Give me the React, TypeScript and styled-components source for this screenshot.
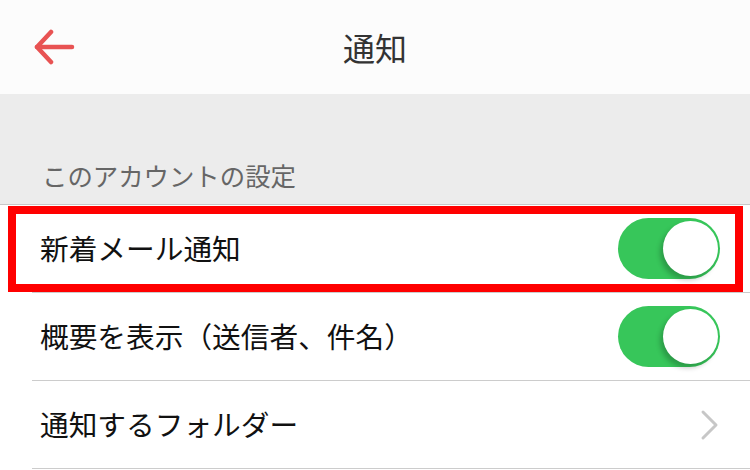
import styled, { createGlobalStyle } from 'styled-components';

const GlobalStyle = createGlobalStyle`
  html, body {
    margin: 0;
    padding: 0;
    background: #ffffff;
  }
  body {
    font-family: "Noto Sans CJK JP", "Noto Sans", sans-serif;
  }
`;

const Screen = styled.div`
  width: 750px;
  height: 470px;
  overflow: hidden;
  background: #ffffff;
`;

const Header = styled.header`
  height: 94px;
  background: #fcfcfc;
  display: grid;
  grid-template-columns: 120px 1fr 120px;
  align-items: center;
`;

const BackButton = styled.button`
  border: none;
  background: none;
  padding: 0 0 0 33px;
  height: 40px;
  display: flex;
  align-items: center;
  cursor: pointer;
`;

const Title = styled.h1`
  margin: 0;
  text-align: center;
  font-size: 32px;
  font-weight: 400;
  color: #333333;
  line-height: 1;
`;

const SectionHead = styled.div`
  height: 111px;
  background: #ececec;
  border-bottom: 1px solid #c8c8c8;
  box-sizing: border-box;
  display: flex;
  align-items: flex-end;
  padding: 0 0 16px 42px;
  font-size: 25.4px;
  color: #666666;
  line-height: 1;
`;

const List = styled.ul`
  list-style: none;
  margin: 0;
  padding: 0;
`;

const Row = styled.li`
  position: relative;
  height: 88px;
  margin-left: 32px;
  padding: 0 30px 0 8px;
  box-sizing: border-box;
  border-bottom: 1px solid #cccccc;
  display: flex;
  align-items: center;
  justify-content: space-between;
  font-size: 28.7px;
  color: #111111;
`;

const Highlight = styled.span`
  position: absolute;
  left: -24px;
  right: 7px;
  top: 1px;
  bottom: 0px;
  border: 8px solid #ff0000;
  pointer-events: none;
`;

const Label = styled.span`
  line-height: 1;
`;

const Track = styled.span<{ $on: boolean }>`
  position: relative;
  width: 102px;
  height: 61px;
  border-radius: 31px;
  background: ${p => (p.$on ? '#37c65a' : '#e5e5ea')};
  flex-shrink: 0;
`;

const Knob = styled.span`
  position: absolute;
  top: 3px;
  right: 2px;
  width: 55px;
  height: 55px;
  border-radius: 50%;
  background: #ffffff;
  box-shadow: -3px 4px 5px rgba(0, 0, 0, 0.22);
`;

const Chevron = () => (
  <svg width="20" height="32" viewBox="0 0 20 32">
    <polyline
      points="3,3 16,16 3,29"
      fill="none"
      stroke="#c7c7c7"
      strokeWidth="3"
      strokeLinecap="round"
      strokeLinejoin="round"
    />
  </svg>
);

const BackArrow = () => (
  <svg width="42" height="36" viewBox="0 0 42 36">
    <g fill="none" stroke="#e85353" strokeWidth="4.5" strokeLinecap="round" strokeLinejoin="round">
      <line x1="4" y1="18" x2="39" y2="18" />
      <polyline points="18,3 4,18 18,33" />
    </g>
  </svg>
);

export default function App() {
  return (
    <>
      <GlobalStyle />
      <Screen>
        <Header>
          <BackButton aria-label="戻る">
            <BackArrow />
          </BackButton>
          <Title>通知</Title>
          <span />
        </Header>
        <SectionHead>このアカウントの設定</SectionHead>
        <List>
          <Row>
            <Highlight />
            <Label>新着メール通知</Label>
            <Track $on>
              <Knob />
            </Track>
          </Row>
          <Row>
            <Label>概要を表示（送信者、件名）</Label>
            <Track $on>
              <Knob />
            </Track>
          </Row>
          <Row>
            <Label>通知するフォルダー</Label>
            <Chevron />
          </Row>
        </List>
      </Screen>
    </>
  );
}
